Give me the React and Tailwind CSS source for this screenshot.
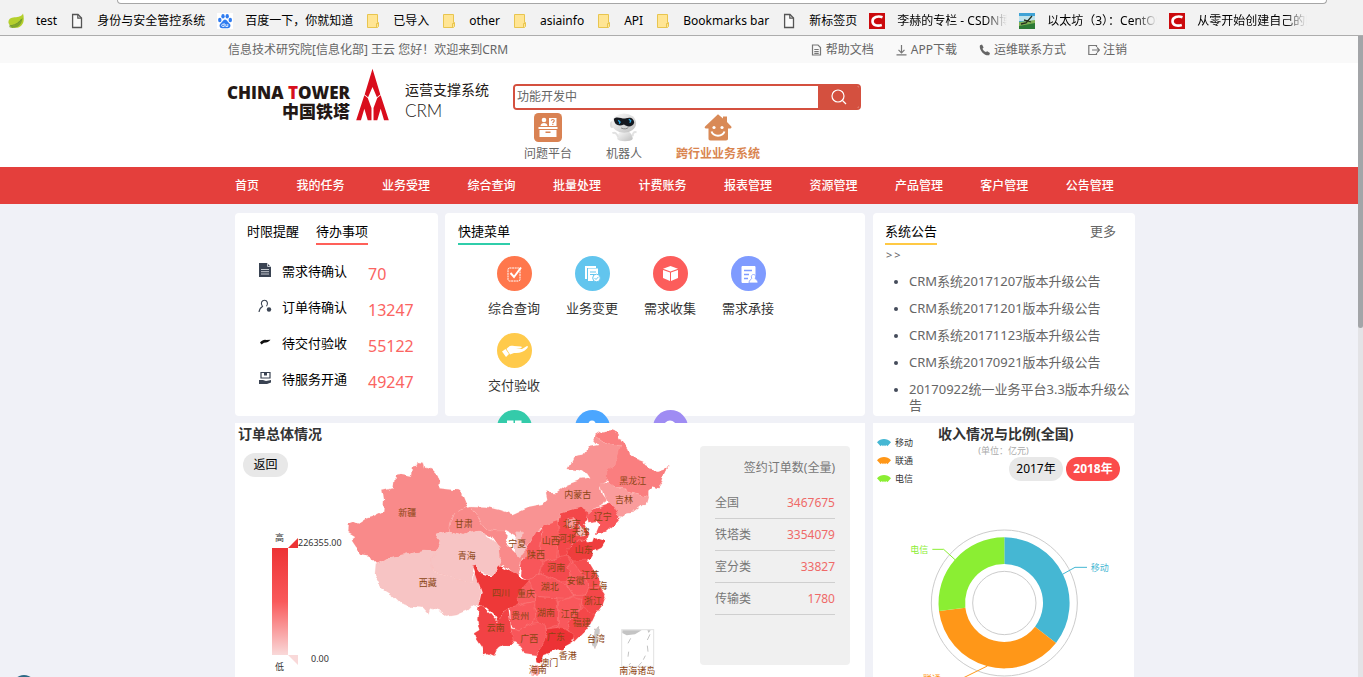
import React from "react";

/* ---------- bookmark bar ---------- */

const Leaf = () => (
  <svg viewBox="0 0 16 16" className="size-4">
    <path d="M0.5 10C0 5 4 4.500 8 4.200C12 4 14 2.500 15 0.500C16.600 6 16 12 11 14.200C7 15.800 2 14.500 0.500 10Z" fill="#b4cf2c" />
    <path d="M1 13.500C6 13 11 11 14.500 4.500C14.500 10 11 14 6.500 14.800C4 15.200 2 14.800 1 13.500Z" fill="#7fa62a" />
    <path d="M1.500 12.800C6 12.500 10.500 10.500 13.500 6" stroke="#5c8430" strokeWidth="0.8" fill="none" />
  </svg>
);
const Doc = () => (
  <svg viewBox="0 0 16 16" className="size-4">
    <path d="M3.600 1.500H9L12.500 5V14.500H3.600Z" fill="#fafafa" stroke="#555" strokeWidth="1.300" />
    <path d="M8.800 1.500V5.200H12.500" fill="none" stroke="#555" strokeWidth="1.200" />
  </svg>
);
const Paw = () => (
  <svg viewBox="0 0 16 16" className="size-4">
    <rect width="16" height="16" fill="#fff" />
    <g fill="#2f7cf0">
      <ellipse cx="2.800" cy="7" rx="1.700" ry="2.200" />
      <ellipse cx="6" cy="3.200" rx="1.700" ry="2.300" />
      <ellipse cx="10.200" cy="3.200" rx="1.700" ry="2.300" />
      <ellipse cx="13.300" cy="7" rx="1.700" ry="2.200" />
      <path d="M8 6.500C10 6.500 10.500 9 12.500 10.500C14.300 12 13.500 15.200 11 15.200H5C2.500 15.200 1.800 12 3.500 10.500C5.500 9 6 6.500 8 6.500Z" />
    </g>
    <path d="M7.200 10.200V13.500H5.800A1.100 1.100 0 0 1 5.800 11.200H7.200M8.800 11V13.500H10.800V11" fill="none" stroke="#fff" strokeWidth="0.8" />
  </svg>
);
const Folder = () => (
  <svg viewBox="0 0 16 16" className="size-4">
    <path d="M2.500 1.500H12.500V9.500H13.500V13.500L12.500 14.500H2.500Z" fill="#ffe594" stroke="#e8c54f" />
    <path d="M11.500 14V10.500H13.500" fill="none" stroke="#e8c54f" />
  </svg>
);
const RedC = () => (
  <svg viewBox="0 0 16 16" className="size-4">
    <rect width="16" height="16" fill="#cb0a0d" />
    <path d="M13.500 4.200C9 2.500 3.500 4 3.500 8.200C3.500 12.500 8.500 13.300 12.800 12" fill="none" stroke="#fff" strokeWidth="2.600" />
  </svg>
);
const Photo = () => (
  <svg viewBox="0 0 16 16" className="size-4">
    <rect width="16" height="16" fill="#3fa3d6" />
    <rect y="3" width="16" height="5" fill="#bfe3ec" />
    <path d="M0 9L16 7V16H0Z" fill="#7fb054" />
    <path d="M0 13L16 10V16H0Z" fill="#2c7a35" />
    <path d="M2 11L7 10L13 3M5 7L9 8L12 9" stroke="#26301f" strokeWidth="1.300" fill="none" />
  </svg>
);

const bookmarks = [
  [Leaf, "test"],
  [Doc, "身份与安全管控系统"],
  [Paw, "百度一下，你就知道"],
  [Folder, "已导入"],
  [Folder, "other"],
  [Folder, "asiainfo"],
  [Folder, "API"],
  [Folder, "Bookmarks bar"],
  [Doc, "新标签页"],
  [RedC, "李赫的专栏 - CSDN博客", true],
  [Photo, "以太坊（3）：CentOS", true],
  [RedC, "从零开始创建自己的区块链", true],
];

function BookmarkBar() {
  return (
    <div className="h-9 shrink-0 border-b border-[#adadad] bg-[#f2f2f2]">
      <div className="ml-[117px] mr-9 h-1 rounded-b-sm border border-t-0 border-[#a6a6a6] bg-white" />
      <nav className="flex h-[31px] gap-3 overflow-hidden pl-2 text-[12px] leading-4 text-black">
        {bookmarks.map(([Icon, label, cut], i) => (
          <a key={i} href="#" className="flex shrink-0 items-center gap-3 self-start pt-[9px]">
            <Icon />
            <span
              className={
                cut
                  ? "w-[110px] overflow-hidden whitespace-nowrap [mask-image:linear-gradient(to_right,black_80%,transparent)]"
                  : "whitespace-nowrap"
              }
            >
              {label}
            </span>
          </a>
        ))}
      </nav>
    </div>
  );
}

/* ---------- top strip ---------- */

const strip = { fill: "none", stroke: "#777", strokeWidth: 1.2 };
const topLinks = [
  ["帮助文档", <path key="a" d="M1.500 1H7L9.500 3.500V11H1.500ZM3.300 5.500H7.700M3.300 7.500H7.700M3.300 9.300H7.700" {...strip} />],
  ["APP下载", <path key="b" d="M5.500 1V8.500M2.500 5.800L5.500 8.800L8.500 5.800M0.500 10.800H10.500" {...strip} />],
  ["运维联系方式", <path key="c" d="M1 1.200L3 0.500L4.600 3.500L3.500 4.700C4 6 5.500 7.500 6.900 8.100L8.200 7.200L11 9L10.200 11.200C6 12.500-0.500 6 1 1.200Z" fill="#666" />],
  ["注销", <path key="d" d="M8.500 3V1.500H0.800V10.500H8.500V9M4 6H11.500M9 3.500L11.500 6L9 8.500" {...strip} />],
];

function TopStrip() {
  return (
    <div className="h-[27px] bg-[#f9f9f9] text-[12px] leading-[27px] text-[#666]">
      <div className="mx-auto flex max-w-[912px] justify-between pl-[5px] pr-2">
        <span>信息技术研究院[信息化部] 王云 您好！欢迎来到CRM</span>
        <div className="flex gap-[22px]">
          {topLinks.map(([label, icon]) => (
            <a key={label} href="#" className="flex items-center gap-[3px]">
              <svg viewBox="0 0 12 12" className="size-3">{icon}</svg>
              {label}
            </a>
          ))}
        </div>
      </div>
    </div>
  );
}

/* ---------- header ---------- */

const DeskIcon = () => (
  <svg viewBox="0 0 28 29" className="h-[29px] w-7">
    <rect width="28" height="29" rx="4.500" fill="#d98253" />
    <g fill="#fff">
      <circle cx="10" cy="7" r="2.300" />
      <path d="M6.500 13C6.500 9 13.500 9 13.500 13Z" />
      <rect x="15" y="5" width="7.500" height="8" />
      <rect x="4.500" y="14" width="19" height="2" />
      <path d="M5.500 17H22.500V24H5.500Z" />
    </g>
    <path d="M17.300 7.800C17.300 6 20.300 6 20.300 7.800C20.300 9 18.800 9 18.800 10.200M18.800 11V12" stroke="#d98253" strokeWidth="1.100" fill="none" />
    <rect x="11.500" y="18.500" width="5" height="1.500" fill="#d98253" />
  </svg>
);
const RobotIcon = () => (
  <svg viewBox="0 0 30 30" className="h-[29px] w-[30px]">
    <defs>
      <linearGradient id="shell" x1="0" y1="0" x2="1" y2="1">
        <stop offset="0" stopColor="#fdfdfd" />
        <stop offset="1" stopColor="#bdbdbd" />
      </linearGradient>
    </defs>
    <path d="M8 27C8 20 12 18 15 18C20 18 24 21 24 27C22 30 10 30 8 27Z" fill="url(#shell)" />
    <path d="M3 21C6 19 8 22 9 25M28 20C25 19 24 21 24 24" stroke="#e2e2e2" strokeWidth="2" fill="none" />
    <ellipse cx="2.500" cy="12" rx="2" ry="3.500" fill="#ddd" />
    <ellipse cx="15" cy="10.500" rx="12.500" ry="10" fill="url(#shell)" />
    <path d="M4.500 6C8 2.500 14 7 17 5.500C22 3.500 25.500 6 25.500 10C24 15 18 14.500 15 12C10 14 5 13 4.500 6Z" fill="#15191f" />
    <path d="M9 7.500L11 9.500L10 11M20 6.500L22 8L21 10" stroke="#2ba6e0" strokeWidth="1.300" fill="none" />
    <path d="M12 15.500C15 17 18 16.500 19.500 15" stroke="#888" fill="none" />
  </svg>
);
const HouseIcon = () => (
  <svg viewBox="0 0 28 28" className="h-[29px] w-7">
    <path d="M14 0.800L19 5V3H23V8.500L27.300 13C28 14.500 27 15 25.500 15H24V25C24 26.300 23.500 27 22 27H6.500C5 27 4.500 26.300 4.500 25V15H2C0.500 15 0.300 13.800 1.300 12.800Z" fill="#d98a57" />
    <circle cx="10" cy="14" r="1.600" fill="#fff" />
    <circle cx="18" cy="14" r="1.600" fill="#fff" />
    <path d="M7.500 18C9.500 23.500 18.500 23.500 20.500 18" stroke="#fff" strokeWidth="2" fill="none" />
  </svg>
);

function Header() {
  return (
    <header className="h-[104px] bg-white">
      <div className="mx-auto flex max-w-[912px] pl-[5px]">
        <div className="flex w-[122px] flex-col items-end pt-5 text-[#231815]">
          <span className="whitespace-nowrap font-['Open_Sans'] text-[17px] font-extrabold leading-5">
            CHINA <span className="text-[#d7101d]">T</span>OWER
          </span>
          <span className="text-[17px] font-black leading-[18px]">中国铁塔</span>
        </div>
        <svg viewBox="0 0 96 156" className="ml-[6px] mt-[5px] h-[53px] w-[33px]">
          <g fill="#d90d1c">
            <path d="M48 2L71 78L61 86L48 56L35 86L25 78Z" />
            <path d="M24 80L34 88L45 118V154H34L24 120L14 154H0Z" />
            <path d="M72 80L62 88L51 118V154H62L72 120L82 154H96Z" />
          </g>
        </svg>
        <div className="ml-4 w-[108px] pt-4 text-[#231815]">
          <div className="text-[14px] leading-[22px]">运营支撑系统</div>
          <div className="font-['Lato'] text-[17px] font-light leading-5">CRM</div>
        </div>
        <div>
          <form className="mt-[21px] flex h-[26px] w-[348px] overflow-hidden rounded-sm border-2 border-[#d4503f] bg-white">
            <input
              aria-label="搜索"
              defaultValue="功能开发中"
              className="min-w-0 flex-1 bg-white px-[2px] text-[12px] text-[#666] outline-none"
            />
            <button type="button" aria-label="搜索" className="flex w-[41px] items-center justify-center bg-[#d4503f]">
              <svg viewBox="0 0 16 16" className="size-4">
                <circle cx="7" cy="7" r="6" fill="none" stroke="#fff" strokeWidth="1.200" />
                <path d="M11.500 11.500L15 15" stroke="#fff" strokeWidth="1.200" />
              </svg>
            </button>
          </form>
          <div className="mt-[3px] flex gap-[34px] pl-[11px] text-[12px] leading-6 text-[#666]">
            <a href="#" className="flex flex-col items-center"><DeskIcon />问题平台</a>
            <a href="#" className="flex flex-col items-center"><RobotIcon />机器人</a>
            <a href="#" className="flex flex-col items-center font-bold text-[#d98550]"><HouseIcon />跨行业业务系统</a>
          </div>
        </div>
      </div>
    </header>
  );
}

const menu = ["首页", "我的任务", "业务受理", "综合查询", "批量处理", "计费账务", "报表管理", "资源管理", "产品管理", "客户管理", "公告管理"];

function MainNav() {
  return (
    <nav className="bg-[#e43f3c]">
      <div className="mx-auto flex h-[37px] max-w-[912px] items-center justify-between pl-3 pr-[21px] text-[12px] font-medium text-white">
        {menu.map((m) => (
          <a key={m} href="#">{m}</a>
        ))}
      </div>
    </nav>
  );
}

/* ---------- upper cards ---------- */

const todos = [
  ["需求待确认", "70", <g key="a"><path d="M1 0H9L13 4V14H1Z" fill="#3a4352" /><path d="M9.500 0V3.500H13M3 6.500H11M3 8.700H11M3 11H11" fill="none" stroke="#c5c9cf" /></g>],
  ["订单待确认", "13247", <g key="b"><path d="M1 13C1.500 9.500 3 8.300 4.500 7.500C2 4 4 1.200 6.500 1.200C9.200 1.200 10.500 4.500 8.500 7.300" fill="none" stroke="#3a4352" strokeWidth="1.100" /><circle cx="11" cy="10.500" r="2.200" fill="#3a4352" /></g>],
  ["待交付验收", "55122", <path key="c" d="M2 7.500C4 5.500 6 4.500 8 5L12.500 4.800C11 6.500 9 7.800 6 7.800L3.500 9.500Z" fill="#111" />],
  ["待服务开通", "49247", <g key="d"><path d="M3 1.500H12V7H3Z" fill="none" stroke="#3a4352" strokeWidth="1.200" /><path d="M6 2H9V4.500H6Z" fill="#3a4352" /><path d="M1 9H5L8 10L13 9V11.500L9 13H1Z" fill="#3a4352" /></g>],
];

function TodoCard() {
  return (
    <section className="h-[203px] w-[203px] rounded-sm bg-white">
      <div className="flex gap-[17px] pl-3 pt-[7px] text-[13px] leading-[23px] text-black">
        <button type="button" className="border-b-2 border-transparent">时限提醒</button>
        <button type="button" className="border-b-2 border-[#ff6059]">待办事项</button>
      </div>
      <ul className="mt-[9px]">
        {todos.map(([label, n, icon]) => (
          <li key={label} className="flex h-9 items-center pl-[23px]">
            <svg viewBox="0 0 14 14" className="mb-1 size-[14px]">{icon}</svg>
            <span className="ml-[10px] w-[86px] text-[13px] text-black">{label}</span>
            <a href="#" className="pt-[3px] text-[16px] text-[#fb6461]">{n}</a>
          </li>
        ))}
      </ul>
    </section>
  );
}

const I = {
  check: <g fill="none" stroke="#fff"><rect x="11" y="12" width="12" height="13" rx="1.500" strokeDasharray="2 0.600" /><path d="M13.500 17L17 21L24 11.500" strokeWidth="2" /></g>,
  change: <g><path d="M10 10H21V12H12V23H10Z" fill="#fff" /><path d="M13 12.500H23V25H13Z" fill="#fff" /><path d="M15 16H21M15 18.500H20" stroke="#62c5ee" /><circle cx="21.500" cy="22" r="3.800" fill="#fff" stroke="#62c5ee" /><path d="M19.500 22L21 23.500L23.500 20.800" stroke="#62c5ee" fill="none" /></g>,
  box: <g fill="#fff"><path d="M17.500 10L25 12.800L17.500 15.600L10 12.800Z" /><path d="M10 14L17 16.500V25L10 22Z" /><path d="M25 14L18 16.500V25L25 22Z" /></g>,
  accept: <g><path d="M11 10.500H24V20L19 26.500H11Z" fill="#fff" stroke="#fff" /><path d="M13 14.500H21M13 18.500H18M13 22.500H17" stroke="#7f9bff" strokeWidth="1.300" /><path d="M18 27C18 24 20 23.500 20.800 22.500C19.500 20 21 18.500 22.500 18.500C24 18.500 25.500 20 24 22.500C25 23.500 27 24 27 27Z" fill="#fff" stroke="#7f9bff" strokeWidth="0.800" /></g>,
  hand: <path d="M5 18.500L8.500 16L12 21L9 24ZM9.500 16C12 13 14 12.500 17 13L24 13.500C25.500 14 24.500 15.500 23 15.500L19 16L25 16L30 13C31.500 13 31 14.500 30 15.500C26 19.500 22 20.500 17 20L13 21.500Z" fill="#fff" />,
  grid: <path d="M10 10.500H16.500V17H10ZM18 10.500H24.500V17H18Z" fill="#fff" />,
  user: <circle cx="17" cy="14" r="3.500" fill="#fff" />,
  ring: <circle cx="17" cy="17" r="5" fill="none" stroke="#fff" strokeWidth="3" />,
};
const quick = [
  [["综合查询", "#ff774c", I.check], ["业务变更", "#62c5ee", I.change], ["需求收集", "#fc5d5b", I.box], ["需求承接", "#7f9bff", I.accept]],
  [["交付验收", "#ffca4b", I.hand]],
  [["资源管理", "#34cbaa", I.grid], ["客户管理", "#4ba6ff", I.user], ["综合统计", "#9f8cf3", I.ring]],
];

function QuickCard() {
  return (
    <section className="h-[203px] w-[420px] rounded-sm bg-white">
      <div className="pl-[13px] pt-[7px] text-[13px] leading-[23px] text-black">
        <h2 className="inline-block border-b-2 border-[#2fcdaa]">快捷菜单</h2>
      </div>
      <div className="pl-[30px] pt-[11px]">
        {quick.map((row, i) => (
          <div key={i} className="flex h-[77px]">
            {row.map(([label, color, icon]) => (
              <a key={label} href="#" className="flex w-[78px] flex-col items-center text-[13px] leading-[34px] text-[#333]">
                <svg viewBox="0 0 35 35" className="size-[35px]">
                  <circle cx="17.500" cy="17.500" r="17.500" fill={color} />
                  {icon}
                </svg>
                {label}
              </a>
            ))}
          </div>
        ))}
      </div>
    </section>
  );
}

const notices = [
  "CRM系统20171207版本升级公告",
  "CRM系统20171201版本升级公告",
  "CRM系统20171123版本升级公告",
  "CRM系统20170921版本升级公告",
  "20170922统一业务平台3.3版本升级公告",
];

function NoticeCard() {
  return (
    <section className="h-[203px] w-[262px] rounded-sm bg-white text-[13px] text-[#666]">
      <div className="flex justify-between pl-3 pr-[19px] pt-[7px] leading-[23px]">
        <h2 className="border-b-2 border-[#ffc944] text-black">系统公告</h2>
        <a href="#">更多</a>
      </div>
      <div className="flex gap-[2px] pl-[13px] text-[11px] leading-5"><span>&gt;</span><span>&gt;</span></div>
      <ul className="flex list-disc flex-col gap-[11px] pl-9 pt-2 leading-4 marker:text-[11px] marker:text-[#444b5a]">
        {notices.map((n) => (
          <li key={n}><a href="#">{n}</a></li>
        ))}
      </ul>
    </section>
  );
}

/* ---------- map ---------- */

const provinces = [
  ["#f98a8a", "108,416 97,405 90,392 62,388 45,368 33,350 45,330 25,318 27,296 42,290 55,296 75,283 100,275 130,260 132,228 127,197 160,190 165,152 185,150 210,155 213,125 230,122 233,108 248,110 252,128 275,134 290,150 297,170 295,190 350,196 372,215 380,235 378,245 350,262 330,290 325,318 285,330 300,350 290,380 250,376 215,382 185,395 150,400"],
  ["#f99393", "395,243 440,245 480,255 520,268 560,250 610,240 625,225 620,200 650,202 680,180 720,165 748,160 735,140 715,135 683,132 700,97 730,92 750,65 775,60 760,42 765,30 785,45 810,62 842,60 840,95 825,120 800,150 800,170 780,180 785,205 800,225 790,240 755,255 745,270 720,250 690,255 660,262 655,290 620,310 595,315 575,345 555,375 545,345 535,340 498,318 470,318 440,312 430,300 415,280 400,262"],
  ["#f98a8a", "378,245 395,243 400,262 415,280 430,300 440,312 470,318 498,318 495,350 510,365 530,385 560,370 570,388 545,402 542,420 530,452 515,442 490,420 470,430 480,400 478,370 455,335 420,318 395,325 370,330 325,318 330,290 350,262"],
  ["#f7c4c4", "540,316 548,325 545,345 560,368 545,385 540,400 525,385 525,350 530,325"],
  ["#fa7e7f", "765,30 780,20 810,16 835,25 850,50 865,70 870,95 910,110 920,130 950,135 985,124 975,140 965,175 955,190 940,185 925,200 925,215 890,205 870,200 850,190 830,190 810,175 792,150 825,120 842,60 810,62 785,45"],
  ["#fa9c9c", "780,175 810,175 830,190 850,190 870,200 890,205 927,215 920,240 905,240 880,260 860,262 838,280 825,250 810,232 795,220"],
  ["#f9565a", "755,255 800,240 808,230 825,245 838,280 830,290 795,320 768,325 778,300 770,288 745,292 742,270"],
  ["#f44749", "660,262 690,255 720,248 745,262 742,285 730,295 745,325 740,340 715,345 690,365 680,392 660,398 652,370 655,330 655,290"],
  ["#fa9c9c", "682,284 700,280 708,295 700,312 684,306"],
  ["#f7c4c4", "714,300 728,306 730,330 716,332"],
  ["#ef3c3e", "685,370 715,345 740,340 745,352 760,350 765,337 775,345 795,352 785,368 760,380 745,405 725,412 700,408 680,390"],
  ["#fa5b5d", "610,300 655,285 658,330 652,370 650,400 610,412 598,390 605,350"],
  ["#f8565a", "590,318 610,315 603,350 598,390 605,412 600,445 565,465 540,450 545,405 570,390 560,370 575,345"],
  ["#f44a4d", "610,412 650,400 660,395 680,390 692,408 680,425 690,450 680,470 655,470 620,455 602,445"],
  ["#f54d50", "700,408 745,405 760,430 780,465 785,485 750,490 740,465 720,440 700,425"],
  ["#f9595c", "680,425 700,412 720,440 740,465 750,490 740,510 700,512 680,480 690,450"],
  ["#f8565a", "565,465 600,445 655,470 680,480 700,512 680,520 640,518 600,515 570,520 560,500"],
  ["#f7c4c4", "285,330 325,318 370,330 395,322 420,318 440,330 478,365 482,395 470,430 455,452 425,440 410,422 400,430 395,470 370,468 330,455 280,440 275,400 290,380 300,350"],
  ["#f7c4c4", "108,416 150,400 215,382 250,374 290,380 278,405 280,440 330,455 370,468 395,470 405,440 415,470 422,500 415,545 400,540 385,555 350,570 318,575 300,560 270,550 265,565 250,548 215,545 180,535 155,510 130,495 105,450"],
  ["#ee3739", "400,425 410,422 425,445 455,455 470,430 485,425 520,445 545,462 567,465 565,490 540,500 530,520 540,545 510,550 490,560 475,590 465,570 440,545 415,545 425,500 415,470"],
  ["#f95c5f", "540,500 567,470 585,510 585,530 560,535 535,545 528,520"],
  ["#f9595c", "510,550 545,540 580,530 585,575 580,595 540,615 512,600"],
  ["#f24345", "428,543 450,560 465,578 475,590 490,560 505,550 512,600 515,620 530,640 515,660 490,660 470,675 462,692 445,685 430,688 425,665 405,635 402,625 418,615 412,590 415,550"],
  ["#f8565a", "512,605 540,615 580,595 610,590 620,620 615,650 590,690 555,685 545,665 520,650"],
  ["#f54d50", "585,515 650,518 657,540 655,600 622,612 600,595 585,575"],
  ["#f9595c", "655,530 700,515 725,525 715,560 690,590 680,615 655,615"],
  ["#f44749", "725,512 740,510 750,490 785,488 797,505 785,540 765,568 740,565 722,540"],
  ["#f44749", "725,545 765,568 750,600 735,620 705,650 700,628 680,615 690,590 715,560"],
  ["#ed3335", "622,612 660,608 705,628 700,650 665,670 640,680 610,690 600,715 592,712 590,690 612,655"],
  ["#f9a5a5", "573,730 592,720 602,735 590,752 575,752"],
  ["#c9c9c9", "762,615 780,608 778,640 765,675 752,655"],
];
const labels = [
  ["新疆", 202, 273], ["甘肃", 371, 305], ["青海", 380, 403], ["西藏", 263, 482], ["内蒙古", 713, 219], ["黑龙江", 878, 176],
  ["吉林", 852, 235], ["辽宁", 788, 286], ["北京", 695, 305], ["天津", 722, 331], ["河北", 680, 351], ["山西", 632, 358],
  ["宁夏", 532, 365], ["陕西", 588, 398], ["山东", 731, 384], ["河南", 649, 438], ["江苏", 751, 458], ["安徽", 707, 476],
  ["上海", 775, 493], ["湖北", 629, 495], ["四川", 483, 513], ["重庆", 558, 515], ["浙江", 759, 537], ["贵州", 541, 583],
  ["湖南", 618, 573], ["江西", 689, 575], ["福建", 725, 603], ["云南", 467, 618], ["广西", 568, 652], ["广东", 648, 646],
  ["台湾", 768, 652], ["香港", 683, 701], ["澳门", 628, 723], ["海南", 593, 745], ["南海诸岛", 892, 747],
];

function ChinaMap() {
  return (
    <svg viewBox="0 0 1005 765" className="mt-[2px] h-[255px] w-[335px]">
      <defs>
        <filter id="coast" x="0" y="0" width="1" height="1">
          <feTurbulence type="fractalNoise" baseFrequency="0.035" numOctaves="2" seed="4" />
          <feDisplacementMap in="SourceGraphic" scale="20" xChannelSelector="R" yChannelSelector="G" />
        </filter>
      </defs>
      <g filter="url(#coast)">
        <rect width="1005" height="765" fill="none" />
        <polygon points="555,375 655,290 740,330 690,365 740,405 785,485 785,540 700,640 610,680 520,640 540,500 560,465" fill="#f8565a" />
        {provinces.map(([fill, points]) => (
          <polygon key={points} points={points} fill={fill} stroke="#ffb3b0" strokeOpacity="0.4" strokeWidth="1.500" />
        ))}
      </g>
      <g stroke="#e2e2e2" fill="none" strokeWidth="3">
        <rect x="845" y="614" width="96" height="110" />
        <path d="M872 640L864 655M866 680L864 695M872 714L867 720M930 628L922 645M922 662L924 680M916 692L910 704M905 712L896 722" stroke="#c4c4c4" />
      </g>
      <path d="M847 616H905L885 628L860 631L847 624ZM922 616H932L926 624Z" fill="#c4c4c4" />
      <g fontSize="27" fill="#8b4513" textAnchor="middle">
        {labels.map(([t, x, y]) => (
          <text key={t} x={x} y={y}>{t}</text>
        ))}
      </g>
    </svg>
  );
}

const orders = [["全国", "3467675"], ["铁塔类", "3354079"], ["室分类", "33827"], ["传输类", "1780"]];

function OrderCard() {
  return (
    <section className="relative flex h-[300px] w-[630px] bg-white">
      <div className="w-[105px] shrink-0 pl-[3px]">
        <h2 className="whitespace-nowrap text-[14px] font-bold leading-[22px] text-[#333]">订单总体情况</h2>
        <button type="button" className="ml-[5px] mt-2 block h-6 w-[45px] rounded-full bg-[#e8e8e8] text-[12px] text-black">返回</button>
        <svg viewBox="0 0 105 150" className="mt-[51px] h-[150px] w-[105px]">
          <defs>
            <linearGradient id="heat" x1="0" y1="0" x2="0" y2="1">
              <stop offset="0" stopColor="#ed3335" />
              <stop offset="0.5" stopColor="#f9595b" />
              <stop offset="1" stopColor="#f9d9d9" />
            </linearGradient>
          </defs>
          <rect x="34" y="20" width="16" height="107" fill="url(#heat)" />
          <path d="M50 20L60 10V20Z" fill="#ed3335" />
          <path d="M50 127H60V137Z" fill="#f9d9d9" />
          <g fontSize="9" fill="#333">
            <text x="37" y="13">高</text>
            <text x="37" y="142">低</text>
            <text x="60" y="18">226355.00</text>
            <text x="73" y="134">0.00</text>
          </g>
        </svg>
      </div>
      <ChinaMap />
      <div className="ml-[25px] mt-[23px] h-[219px] w-[150px] rounded bg-[#f0f0f0] px-[15px] text-[12px] text-[#777]">
        <h3 className="pb-[6px] pt-[10px] text-right leading-6">签约订单数(全量)</h3>
        <table className="w-full">
          <tbody>
            {orders.map(([k, v]) => (
              <tr key={k} className="h-8 border-b border-[#cfcfcf]">
                <th scope="row" className="pt-[2px] text-left font-normal">{k}</th>
                <td className="pt-[2px] text-right text-[#ef6a68]">{v}</td>
              </tr>
            ))}
          </tbody>
        </table>
      </div>
    </section>
  );
}

/* ---------- income ---------- */

const legend = [["移动", "#45b7d3"], ["联通", "#ff9718"], ["电信", "#8bee33"]];

function IncomeCard() {
  return (
    <section className="relative h-[300px] w-[261px] bg-white">
      <div className="flex h-[67px]">
        <ul className="w-[65px] pl-1 pt-[11px] text-[9px] leading-[18px] text-[#333]">
          {legend.map(([t, c]) => (
            <li key={t} className="flex items-center gap-1">
              <svg viewBox="0 0 42 24" className="h-2 w-[14px]">
                <path d="M0 10C12-3 30-3 42 10L31 22C30 18 26 18 24 22C22 18 20 18 18 22C16 18 12 18 11 22Z" fill={c} />
              </svg>
              {t}
            </li>
          ))}
        </ul>
        <div className="flex-1">
          <h2 className="whitespace-nowrap text-[14px] font-bold leading-[22px] text-[#333]">收入情况与比例(全国)</h2>
          <div className="w-[131px] text-center text-[9px] leading-3 text-[#aaa]">(单位：亿元)</div>
          <div className="flex justify-end gap-[3px] pr-[14px] text-[12px]">
            <button type="button" className="h-6 w-[54px] rounded-full bg-[#e8e8e8] text-black">2017年</button>
            <button type="button" className="h-6 w-[54px] rounded-full bg-[#fb4c4b] font-bold text-white">2018年</button>
          </div>
        </div>
      </div>
      <svg viewBox="24 240 783 570" className="mt-[10px] h-[190px] w-[261px]">
        <g fill="none" stroke="#ccc" strokeWidth="3">
          <circle cx="418" cy="549" r="219" />
          <circle cx="418" cy="549" r="95" />
        </g>
        <path d="M418 352A197 197 0 0 1 573 669L510 620A117 117 0 0 0 418 432Z" fill="#45b7d3" />
        <path d="M573 669A197 197 0 0 1 222 573L301 563A117 117 0 0 0 510 620Z" fill="#ff9718" />
        <path d="M222 573A197 197 0 0 1 418 352V432A117 117 0 0 0 301 563Z" fill="#8bee33" />
        <g fill="none" strokeWidth="3">
          <path d="M594 462L630 442H666" stroke="#45b7d3" />
          <path d="M270 419L236 388H202" stroke="#8bee33" />
          <path d="M367 738L294 774H240" stroke="#ff9718" />
        </g>
        <g fontSize="27">
          <text x="677" y="453" fill="#45b7d3">移动</text>
          <text x="136" y="399" fill="#8bee33">电信</text>
          <text x="174" y="787" fill="#ff9718">联通</text>
        </g>
      </svg>
    </section>
  );
}

export default function App() {
  return (
    <div className="flex h-screen flex-col overflow-hidden bg-[#f0f1f7] font-['Noto_Sans','Noto_Sans_CJK_SC',sans-serif]">
      <BookmarkBar />
      <div className="flex min-h-0 flex-1">
        <div className="min-w-0 flex-1 overflow-hidden">
          <TopStrip />
          <Header />
          <MainNav />
          <main className="mx-auto flex max-w-[912px] flex-col gap-[7px] pl-3 pt-[9px]">
            <div className="flex gap-[7px]">
              <TodoCard />
              <QuickCard />
              <div className="pl-px"><NoticeCard /></div>
            </div>
            <div className="flex gap-2">
              <OrderCard />
              <IncomeCard />
            </div>
          </main>
        </div>
        <div className="w-[5px] bg-[#e3e3e6]">
          <div className="h-[292px] rounded-b-sm bg-[#a3a5a8]" />
        </div>
      </div>
      <div className="absolute -bottom-[22px] left-3 size-6 rounded-full bg-[#2d6a86]" />
    </div>
  );
}
